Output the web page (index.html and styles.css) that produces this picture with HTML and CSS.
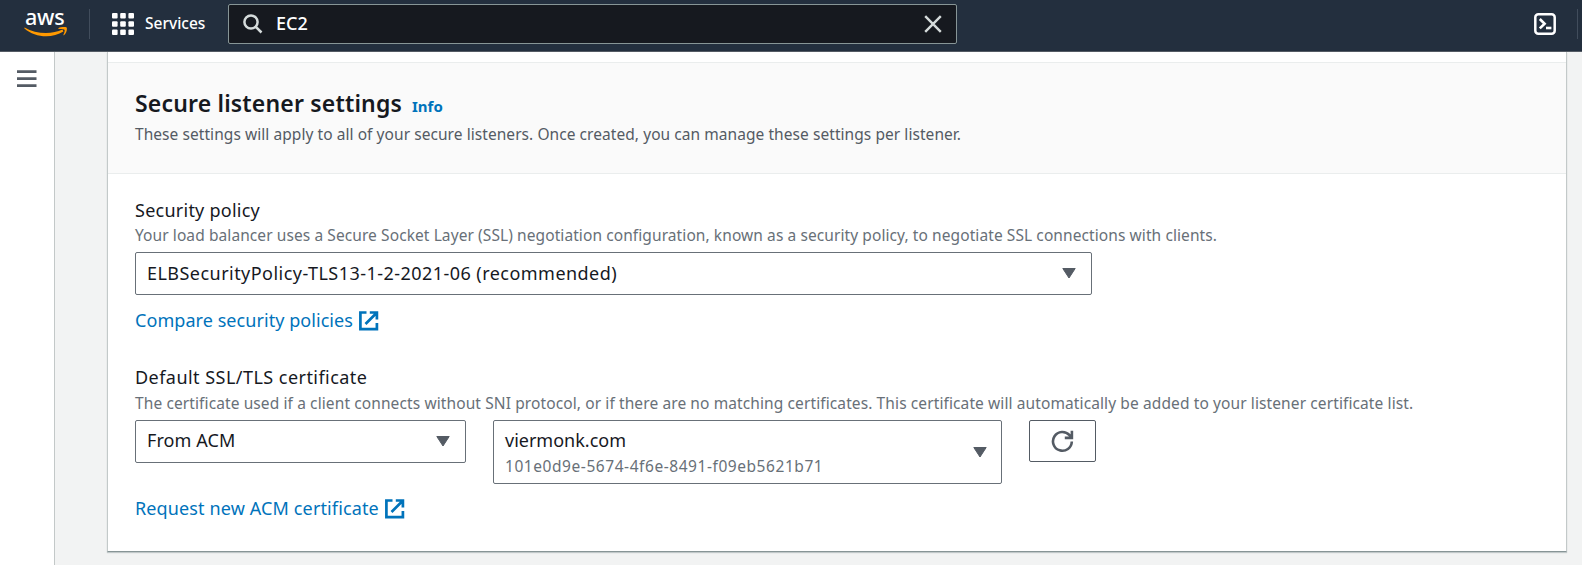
FILE: index.html
```html
<!DOCTYPE html>
<html lang="en">
<head>
<meta charset="utf-8">
<title>Secure listener settings</title>
<link rel="stylesheet" href="styles.css">
</head>
<body>
<header class="topbar">
  <a class="logo" aria-label="AWS">
    <span class="logo-text">aws</span>
    <svg class="logo-smile" width="44" height="11" viewBox="0 0 44 11"><path d="M.6.5C12 7.300 28 7.600 38.500 2.600L39.400 4.500C28 11.800 11 10.800.2 1.300z" fill="#f90"/><path d="M34.300 1.200C37-.1 41-.1 42.700.5C43.500 3 42 6.500 40 8.200C39.400 8.400 39.300 8.100 39.500 7.600C40.300 5.700 41 3.600 40.500 2.700C39.600 1.800 37 1.900 34.500 2.100z" fill="#f90"/></svg>
  </a>
  <span class="divider"></span>
  <div class="services">
    <svg width="22" height="22" viewBox="0 0 22 22" fill="#fff"><rect width="5.600" height="5.600" rx="1"/><rect x="8.200" width="5.600" height="5.600" rx="1"/><rect x="16.400" width="5.600" height="5.600" rx="1"/><rect y="8.200" width="5.600" height="5.600" rx="1"/><rect x="8.200" y="8.200" width="5.600" height="5.600" rx="1"/><rect x="16.400" y="8.200" width="5.600" height="5.600" rx="1"/><rect y="16.400" width="5.600" height="5.600" rx="1"/><rect x="8.200" y="16.400" width="5.600" height="5.600" rx="1"/><rect x="16.400" y="16.400" width="5.600" height="5.600" rx="1"/></svg>
    <span class="services-text">Services</span>
  </div>
  <div class="search">
    <svg width="20" height="20" viewBox="0 0 20 20" fill="none" stroke="#d5dbdb" stroke-width="2.500"><circle cx="8" cy="8" r="6.600"/><path d="M12.600 12.600L18.500 18.500"/></svg>
    <span class="search-text">EC2</span>
    <svg width="18" height="18" viewBox="0 0 18 18" fill="none" stroke="#d5dbdb" stroke-width="2.400"><path d="M1.200 1.200L16.800 16.800M16.800 1.200L1.200 16.800"/></svg>
  </div>
  <svg class="shell" width="22" height="22" viewBox="0 0 22 22" fill="none" stroke="#fff"><rect x="1.300" y="1.300" width="19.400" height="19.400" rx="3" stroke-width="2.500"/><path d="M5.800 6L10.600 10.700L5.800 15.400" stroke-width="2.600"/><path d="M12 15H17.400" stroke-width="2.600"/></svg>
  <span class="divider"></span>
</header>
<div class="page">
  <nav class="sidebar">
    <svg width="20" height="18" viewBox="0 0 20 18" fill="#545b64"><path d="M0 .3H19.500V3.100H0zM0 7.200H19.500V10H0zM0 14.200H19.500V17H0z"/></svg>
  </nav>
  <main class="panel">
    <div class="panel-head">
      <div class="title-row"><h2 class="title">Secure listener settings</h2><a class="info">Info</a></div>
      <p class="desc desc-head">These settings will apply to all of your secure listeners. Once created, you can manage these settings per listener.</p>
    </div>
    <div class="panel-body">
      <div class="label label-policy">Security policy</div>
      <p class="desc desc-policy">Your load balancer uses a Secure Socket Layer (SSL) negotiation configuration, known as a security policy, to negotiate SSL connections with clients.</p>
      <div class="select select-policy"><span class="value value-policy">ELBSecurityPolicy-TLS13-1-2-2021-06 (recommended)</span><svg width="14" height="11" viewBox="0 0 14 11"><path d="M.8.500H13.200L7 10z" fill="#545b64" stroke="#545b64" stroke-linejoin="round"/></svg></div>
      <a class="link link-policy"><span>Compare security policies</span><svg width="20" height="20" viewBox="0 0 20 20" fill="none" stroke="#0073bb" stroke-width="2.700"><path d="M7.500 1.500H1.400V18.200H17.900V12M10.800 1.500H17.900V8.500M17.500 2L6.500 13"/></svg></a>
      <div class="label label-cert">Default SSL/TLS certificate</div>
      <p class="desc desc-cert">The certificate used if a client connects without SNI protocol, or if there are no matching certificates. This certificate will automatically be added to your listener certificate list.</p>
      <div class="cert-row">
        <div class="select select-source"><span class="value value-source">From ACM</span><svg width="14" height="11" viewBox="0 0 14 11"><path d="M.8.500H13.200L7 10z" fill="#545b64" stroke="#545b64" stroke-linejoin="round"/></svg></div>
        <div class="select select-cert"><div class="cert-text"><div class="cert-name">viermonk.com</div><div class="cert-id">101e0d9e-5674-4f6e-8491-f09eb5621b71</div></div><svg width="14" height="11" viewBox="0 0 14 11"><path d="M.8.500H13.200L7 10z" fill="#545b64" stroke="#545b64" stroke-linejoin="round"/></svg></div>
        <button class="refresh" aria-label="Refresh"><svg width="23" height="23" viewBox="0 0 23 23" fill="none" stroke="#545b64" stroke-width="2.600"><path d="M20.800 11.500A9.400 9.400 0 1 1 18.500 5.200L20.500 7.500M20.900.8V7.900H13.800"/></svg></button>
      </div>
      <a class="link link-cert"><span>Request new ACM certificate</span><svg width="20" height="20" viewBox="0 0 20 20" fill="none" stroke="#0073bb" stroke-width="2.700"><path d="M7.500 1.500H1.400V18.200H17.900V12M10.800 1.500H17.900V8.500M17.500 2L6.500 13"/></svg></a>
    </div>
  </main>
</div>
</body>
</html>
```

FILE: styles.css
```css
* { box-sizing: border-box; }
body {
  margin: 0;
  height: 565px;
  overflow: hidden;
  background: #f2f3f3;
  color: #16191f;
  font-family: "Noto Sans", sans-serif;
  font-size: 18px;
  line-height: 24px;
}
h2, p { margin: 0; }
svg { display: block; flex: none; }

.topbar {
  display: flex;
  align-items: flex-start;
  height: 52px;
  padding-left: 24px;
  background: #232f3e;
  border-bottom: 1px solid #545b64;
  color: #fff;
}
.logo { width: 44px; padding-top: 7px; }
.logo-text {
  display: block;
  height: 20px;
  padding-left: 1px;
  font-size: 21.500px;
  font-weight: 500;
  line-height: 20px;
  letter-spacing: -.2px;
}
.divider { width: 1px; height: 30px; margin-top: 9px; background: #414d5c; }
.logo + .divider { margin-left: 21px; }
.services { display: flex; gap: 11px; margin: 13px 0 0 22px; width: 116px; }
.services-text { font-size: 15.500px; font-weight: 500; line-height: 21px; }
.search {
  display: flex;
  align-items: center;
  width: 729px;
  height: 40px;
  margin-top: 4px;
  padding: 0 14px;
  background: #16191f;
  border: 1px solid #879596;
  border-radius: 2px;
}
.search-text { flex: 1; margin: 0 0 2px 13px; font-weight: 500; }
.shell { margin: 13px 21px 0 auto; }
.shell + .divider { margin-right: 4px; }

.page { display: flex; height: 513px; }
.sidebar {
  width: 55px;
  padding: 18px 0 0 17px;
  background: #fff;
  border-right: 1px solid #c3c8c8;
}
.panel {
  width: 1460px;
  height: 500px;
  margin-left: 52px;
  padding-top: 10px;
  background: #fff;
  border: 1px solid #c3c9c9;
  border-top: 0;
  border-bottom: 1px solid #879596;
  box-shadow: 0 1px 1px rgba(0, 28, 36, .2);
}
.panel-head {
  height: 112px;
  padding: 26px 27px 0;
  background: #fafafa;
  border-top: 1px solid #eaeded;
  border-bottom: 1px solid #eaeded;
}
.title-row { display: flex; align-items: baseline; gap: 10px; height: 34px; }
.title { font-size: 23px; font-weight: 600; line-height: 28px; letter-spacing: .17px; }
.info { color: #0073bb; font-size: 15px; font-weight: 700; line-height: 22px; }
.panel-body { padding: 24px 27px 0; }
.desc { color: #687078; font-size: 15.500px; line-height: 22px; white-space: nowrap; }
.desc-head { color: #545b64; letter-spacing: .06px; }
.label-policy { margin-bottom: 2px; letter-spacing: .25px; }
.desc-policy { letter-spacing: .087px; }
.label-cert { margin: 33px 0 3px; letter-spacing: .46px; }
.desc-cert { letter-spacing: .105px; }
.select {
  display: flex;
  align-items: center;
  justify-content: space-between;
  height: 43px;
  padding: 0 15px 0 11px;
  background: #fff;
  border: 1px solid #687078;
  border-radius: 2px;
}
.value { padding-bottom: 2px; line-height: 24px; }
.value-policy { letter-spacing: .46px; }
.value-source { padding-bottom: 3px; letter-spacing: .1px; }
.select-policy { width: 957px; margin-top: 6px; }
.link { display: flex; gap: 6px; height: 24px; color: #0073bb; }
.link svg { margin-top: 3px; }
.link-policy { margin-top: 13px; letter-spacing: .06px; }
.cert-row { display: flex; align-items: flex-start; gap: 27px; margin-top: 6px; }
.select-source { width: 331px; }
.select-cert { width: 509px; height: 64px; padding-right: 14px; }
.cert-text { padding-top: 2px; }
.cert-id { padding-top: 3px; color: #687078; font-size: 15.500px; line-height: 23px; letter-spacing: .56px; }
.refresh {
  display: flex;
  align-items: center;
  justify-content: center;
  width: 67px;
  height: 42px;
  padding: 0;
  background: #fff;
  border: 1px solid #545b64;
  border-radius: 2px;
}
.link-cert { margin-top: 12px; letter-spacing: .13px; }
```
